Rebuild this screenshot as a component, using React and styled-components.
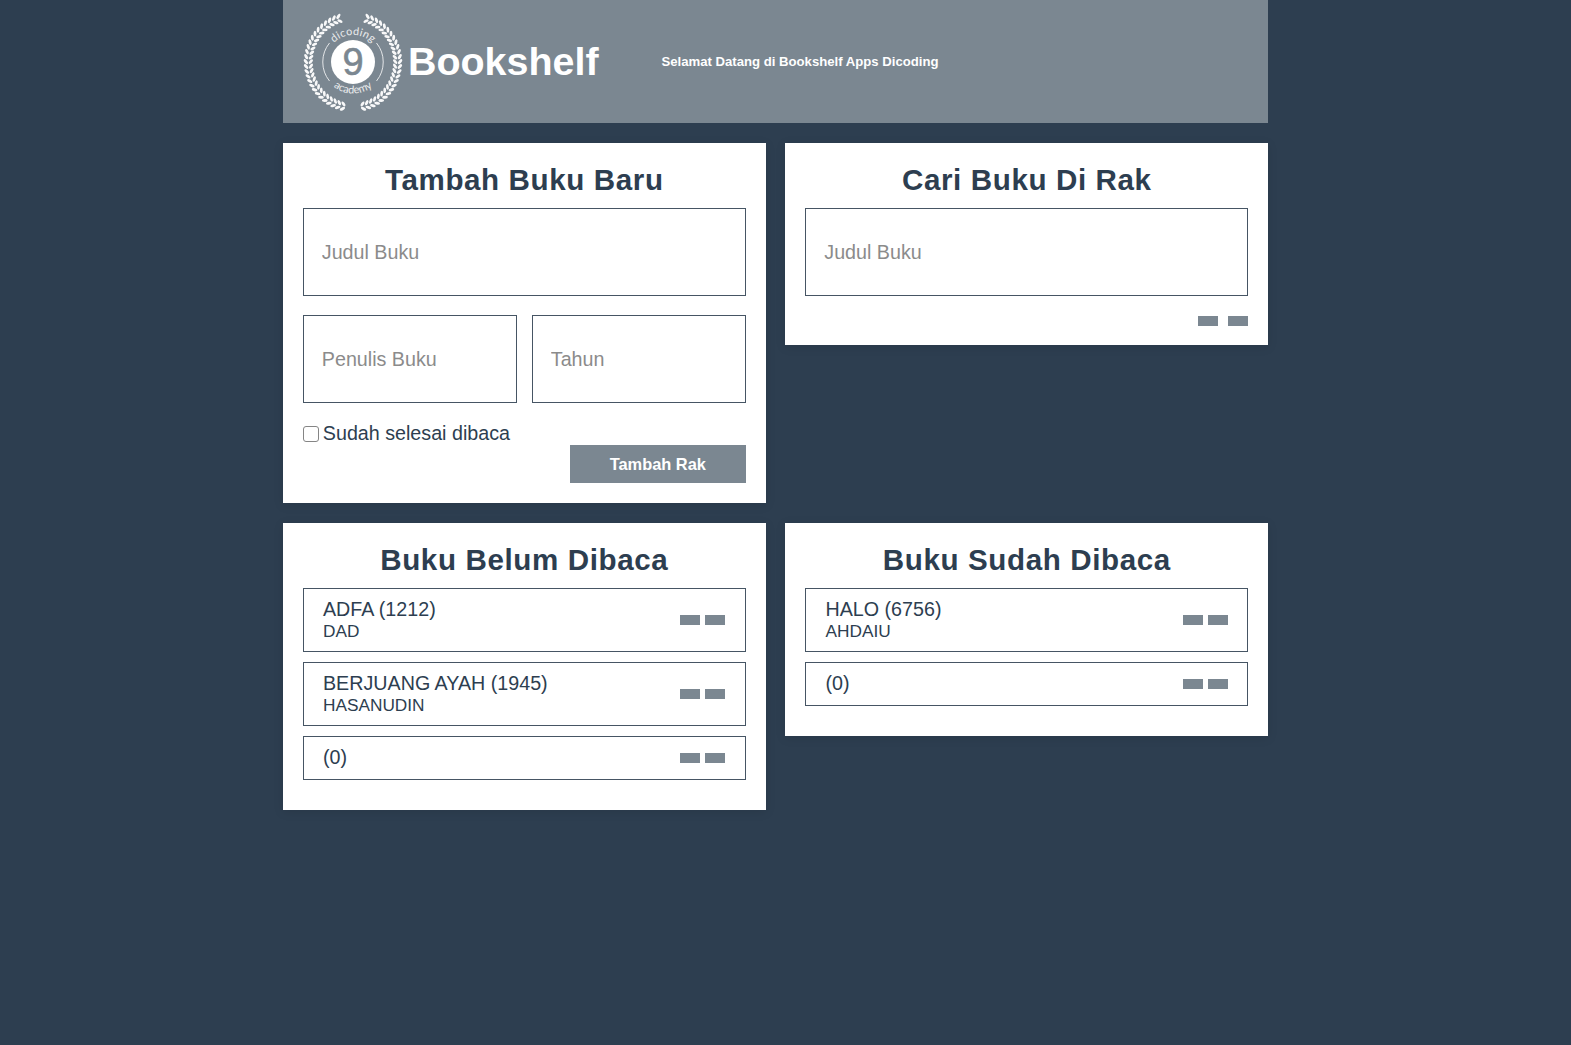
import React from "react";
import styled, { createGlobalStyle } from "styled-components";

const navy = "#2d3e50";
const slate = "#7b8791";
const outline = "#465564";

const GlobalStyle = createGlobalStyle`
  * { box-sizing: border-box; }
  body {
    margin: 0;
    background: ${navy};
    color: ${navy};
    font-family: "Liberation Sans", Arial, sans-serif;
    font-size: 19.7px;
  }
`;

const Page = styled.div`
  width: 985.5px;
  min-height: 1045px;
  margin-left: 282.8px;
`;

const Header = styled.header`
  display: flex;
  align-items: center;
  height: 123px;
  padding-left: 20px;
  background: ${slate};
  color: #fff;
`;

const Logo = styled.svg`
  flex: none;
  width: 100px;
  height: 100px;
`;

const Brand = styled.h1`
  margin: 0 0 2px 5.2px;
  width: 253.5px;
  font-size: 39.43px;
  line-height: 46px;
`;

const Tagline = styled.p`
  margin: 0;
  font-size: 13.15px;
  font-weight: 700;
  line-height: 16px;
  white-space: nowrap;
`;

const Board = styled.main`
  display: grid;
  grid-template-columns: 483px 483px;
  column-gap: 19.5px;
  row-gap: 20px;
  align-items: start;
  padding-top: 20px;
`;

const Card = styled.section`
  height: ${(p) => p.$height}px;
  padding: 19px 20px 20px;
  background: #fff;
  box-shadow: 0 2px 10px rgba(0, 0, 0, 0.1);
`;

const Title = styled.h2`
  margin: 0;
  height: 46px;
  font-size: 29.57px;
  line-height: 35px;
  letter-spacing: 0.616px;
  text-align: center;
`;

const Field = styled.input`
  display: block;
  width: 100%;
  min-width: 0;
  height: 88px;
  padding: 0 18px;
  border: 1px solid ${outline};
  border-radius: 0;
  background: #fff;
  color: ${navy};
  font: inherit;
  outline: none;
  &::placeholder { color: #8b8b8b; opacity: 1; }
`;

const FieldRow = styled.div`
  display: grid;
  grid-template-columns: 1fr 1fr;
  gap: 15px;
  margin-top: 19px;
`;

const CheckLabel = styled.label`
  display: flex;
  align-items: center;
  gap: 4px;
  height: 22px;
  margin-top: 19px;
  line-height: 22px;
`;

const CheckBox = styled.input`
  appearance: none;
  width: 16px;
  height: 16px;
  margin: 2px 0 0;
  border: 1px solid #858585;
  border-radius: 3px;
  background: #fff;
`;

const Submit = styled.button`
  display: block;
  width: 176px;
  height: 38px;
  margin: 1px 0 0 auto;
  padding: 0;
  border: 0;
  background: ${slate};
  color: #fff;
  font: 700 16.4px/37px "Liberation Sans", Arial, sans-serif;
`;

const Actions = styled.div`
  display: flex;
  justify-content: flex-end;
  gap: ${(p) => p.$gap}px;
  margin-top: ${(p) => p.$top || 0}px;
`;

const ActionButton = styled.button`
  width: 20px;
  height: 10px;
  padding: 0;
  border: 0;
  background: ${slate};
`;

const BookList = styled.div`
  display: grid;
  gap: 10px;
`;

const BookRow = styled.article`
  display: flex;
  align-items: center;
  justify-content: space-between;
  height: ${(p) => (p.$short ? 44 : 64)}px;
  padding: 0 19.5px 0 19.2px;
  border: 1px solid ${outline};
`;

const BookText = styled.div`
  padding-bottom: ${(p) => (p.$short ? 2 : 1)}px;
`;

const BookTitle = styled.div`
  line-height: 22px;
`;

const BookAuthor = styled.div`
  font-size: 17.25px;
  line-height: 22px;
`;

// Two rows of leaves running along each side of the emblem.
const leafAngles = Array.from({ length: 26 }, (_, i) => 18 + (i * 149) / 25);

function Branch() {
  return leafAngles.map((angle) => (
    <g key={angle} transform={`rotate(${-angle})`}>
      <ellipse cx="0" cy="-47.1" rx="2.9" ry="1.45" transform="rotate(-38 0 -47.1)" />
      <ellipse cx="0" cy="-42.2" rx="2.8" ry="1.4" transform="rotate(42 0 -42.2)" />
    </g>
  ));
}

function Emblem() {
  return (
    <Logo viewBox="-50 -50 100 100" fill="#fff">
      <defs>
        <path id="upper" d="M-27 0A27 27 0 0 1 27 0" />
        <path id="lower" d="M-31.5 0A31.5 31.5 0 0 0 31.5 0" />
      </defs>
      <g transform="scale(1 1.02)" opacity="0.95">
        <g transform="scale(-1 1)"><Branch /></g>
        <Branch />
      </g>
      <circle r="22" />
      <g fill="none" stroke="#fff" strokeWidth="1" opacity="0.8">
        <path d="M-23.5-19A30.2 30.2 0 0 0-23.5 19" />
        <path d="M23.5-19A30.2 30.2 0 0 1 23.5 19" />
      </g>
      <text y="13.3" textAnchor="middle" fill={slate} stroke={slate} strokeWidth="0.6" fontFamily="Liberation Sans, sans-serif" fontSize="38">9</text>
      <g fontFamily="Lato, sans-serif" textAnchor="middle" opacity="0.85">
        <text fontSize="10.8" letterSpacing="0.3"><textPath href="#upper" startOffset="50%">dicoding</textPath></text>
        <text fontSize="10.8"><textPath href="#lower" startOffset="50%">academy</textPath></text>
      </g>
    </Logo>
  );
}

function Shelf({ title, height, books }) {
  return (
    <Card $height={height}>
      <Title>{title}</Title>
      <BookList>
        {books.map((book, i) => (
          <BookRow key={i} $short={!book.author}>
            <BookText $short={!book.author}>
              <BookTitle>{book.title}</BookTitle>
              {book.author && <BookAuthor>{book.author}</BookAuthor>}
            </BookText>
            <Actions $gap={5}>
              <ActionButton />
              <ActionButton />
            </Actions>
          </BookRow>
        ))}
      </BookList>
    </Card>
  );
}

export default function App() {
  return (
    <>
      <GlobalStyle />
      <Page>
        <Header>
          <Emblem />
          <Brand>Bookshelf</Brand>
          <Tagline>Selamat Datang di Bookshelf Apps Dicoding</Tagline>
        </Header>
        <Board>
          <Card $height={360}>
            <Title>Tambah Buku Baru</Title>
            <Field placeholder="Judul Buku" />
            <FieldRow>
              <Field placeholder="Penulis Buku" />
              <Field placeholder="Tahun" />
            </FieldRow>
            <CheckLabel>
              <CheckBox type="checkbox" />
              Sudah selesai dibaca
            </CheckLabel>
            <Submit>Tambah Rak</Submit>
          </Card>
          <Card $height={202}>
            <Title>Cari Buku Di Rak</Title>
            <Field placeholder="Judul Buku" />
            <Actions $gap={10} $top={20}>
              <ActionButton />
              <ActionButton />
            </Actions>
          </Card>
          <Shelf
            title="Buku Belum Dibaca"
            height={287}
            books={[
              { title: "ADFA (1212)", author: "DAD" },
              { title: "BERJUANG AYAH (1945)", author: "HASANUDIN" },
              { title: "(0)" },
            ]}
          />
          <Shelf
            title="Buku Sudah Dibaca"
            height={213}
            books={[
              { title: "HALO (6756)", author: "AHDAIU" },
              { title: "(0)" },
            ]}
          />
        </Board>
      </Page>
    </>
  );
}
